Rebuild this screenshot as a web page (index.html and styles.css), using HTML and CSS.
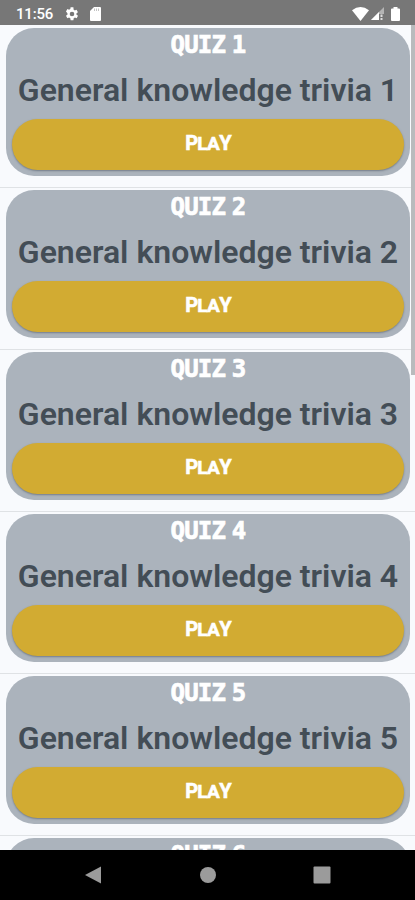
FILE: index.html
```html
<!DOCTYPE html>
<html lang="en">
<head>
<meta charset="utf-8">
<meta name="viewport" content="width=device-width">
<title>Quiz list</title>
<link rel="stylesheet" href="styles.css">
</head>
<body>
<header class="status">
  <span class="time">11:56</span>
  <svg class="gear" viewBox="3 2 20 20"><path fill="#fff" fill-rule="evenodd" d="M19.4 13a7.500 7.500 0 0 0 0-2l2.100-1.600-2-3.500-2.500 1a7.500 7.500 0 0 0-1.700-1L15 2.200h-4l-.4 2.700a7.500 7.500 0 0 0-1.700 1l-2.500-1-2 3.500L6.500 11a7.500 7.500 0 0 0 0 2l-2.100 1.600 2 3.500 2.500-1a7.500 7.500 0 0 0 1.700 1l.4 2.700h4l.4-2.700a7.500 7.500 0 0 0 1.700-1l2.500 1 2-3.500zM13 15.300a3.300 3.300 0 1 1 0-6.600 3.300 3.300 0 0 1 0 6.600z"/></svg>
  <svg class="sd" viewBox="0 0 11 14"><path fill="#fff" d="M4 0h6a1 1 0 0 1 1 1v12a1 1 0 0 1-1 1H1a1 1 0 0 1-1-1V4z"/><path stroke="#aaa" stroke-width=".7" d="M4.500 1.500v2.500M6.500 1.500v2.500M8.500 1.500v2.500"/></svg>
  <span class="spacer"></span>
  <svg class="wifi" viewBox="0 0 17 14"><path fill="#fff" d="M0 3.200Q8.500-3 17 3.200L8.500 14z"/></svg>
  <svg class="signal" viewBox="0 0 13 13"><path fill="#b4b4b4" d="M13 0v13H0z"/><path fill="#fff" d="M8 5v8H0z"/><path fill="#777" d="M8 7h5v6H8z"/><path fill="#ddd" d="M9.500 7.500h2v2.500h-2zM9.500 11h2v2h-2z"/></svg>
  <svg class="battery" viewBox="0 0 9 14"><path fill="#fff" d="M2.500 0h4v1.500H8a1 1 0 0 1 1 1V13a1 1 0 0 1-1 1H1a1 1 0 0 1-1-1V2.500a1 1 0 0 1 1-1h1.500z"/></svg>
</header>
<main class="list">
  <section class="item"><article class="card"><h2 class="quiz">QUIZ 1</h2><p class="name">General knowledge trivia 1</p><button class="play"><span>P<small>LA</small>Y</span></button></article></section>
  <section class="item"><article class="card"><h2 class="quiz">QUIZ 2</h2><p class="name">General knowledge trivia 2</p><button class="play"><span>P<small>LA</small>Y</span></button></article></section>
  <section class="item"><article class="card"><h2 class="quiz">QUIZ 3</h2><p class="name">General knowledge trivia 3</p><button class="play"><span>P<small>LA</small>Y</span></button></article></section>
  <section class="item"><article class="card"><h2 class="quiz">QUIZ 4</h2><p class="name">General knowledge trivia 4</p><button class="play"><span>P<small>LA</small>Y</span></button></article></section>
  <section class="item"><article class="card"><h2 class="quiz">QUIZ 5</h2><p class="name">General knowledge trivia 5</p><button class="play"><span>P<small>LA</small>Y</span></button></article></section>
  <section class="item"><article class="card"><h2 class="quiz">QUIZ 6</h2></article></section>
  <div class="scrollbar"></div>
</main>
<nav class="nav">
  <svg viewBox="0 0 18 18"><path fill="#9b9b9b" d="M0 9 16 .500v17z"/></svg>
  <svg viewBox="0 0 18 18"><circle cx="9" cy="9" r="8" fill="#9b9b9b"/></svg>
  <svg viewBox="0 0 18 18"><rect x=".5" y=".5" width="17" height="17" rx="1" fill="#9b9b9b"/></svg>
</nav>
</body>
</html>
```
FILE: styles.css
```css
* { box-sizing: border-box; }
body {
  margin: 0;
  height: 900px;
  display: flex;
  flex-direction: column;
  overflow: hidden;
  font-family: Roboto, sans-serif;
  background: #f8fafd;
}
.status {
  height: 25px;
  flex: none;
  display: flex;
  align-items: center;
  padding: 2px 15px 0 16px;
  background: #777;
  color: #fff;
}
.time { width: 49px; padding-top: 1px; font-size: 15px; font-weight: 500; line-height: 22px; letter-spacing: -.2px; }
.gear { width: 14px; height: 14px; margin-right: 11px; }
.sd { width: 11px; height: 14px; }
.spacer { flex: 1; }
.wifi { width: 17px; height: 14px; margin-right: 2px; }
.signal { width: 13px; height: 13px; margin-right: 7px; }
.battery { width: 9px; height: 14px; }
.list {
  position: relative;
  height: 825px;
  flex: none;
  overflow: hidden;
}
.item {
  height: 162px;
  padding: 3px 5px 0 6px;
}
.item + .item {
  border-top: 1px solid #dfe2e5;
  padding-top: 2px;
}
.card {
  height: 147.500px;
  padding: 3px 6px 0 6px;
  border-radius: 28px;
  background: #abb3bc;
  text-align: center;
}
.quiz {
  margin: 0;
  height: 39px;
  font: bold 24px/28px "DejaVu Sans Mono", monospace;
  letter-spacing: -.8px;
  word-spacing: -7px;
  color: #fff;
  -webkit-text-stroke: .7px #fff;
}
.name {
  margin: 0 -6px;
  height: 49px;
  font-size: 32px;
  font-weight: 600;
  line-height: 40px;
  color: #434d56;
  white-space: nowrap;
}
.play {
  display: block;
  width: 100%;
  height: 51px;
  padding: 0 0 3px;
  border: 0;
  border-radius: 26px;
  background: #d2ab32;
  box-shadow: 0 1px 2px rgba(70, 80, 95, .55);
  color: #fff;
  font: bold 20px/46px Roboto, sans-serif;
  letter-spacing: -.7px;
}
.play span { -webkit-text-stroke: .6px #fff; }
.play small { font-size: 19px; }
.scrollbar {
  position: absolute;
  top: 0;
  right: 0;
  width: 4px;
  height: 350px;
  background: #b9bbbd;
}
.nav {
  flex: 1;
  display: flex;
  justify-content: center;
  align-items: center;
  gap: 96px;
  background: #000;
}
.nav svg { width: 18px; height: 18px; }
```
